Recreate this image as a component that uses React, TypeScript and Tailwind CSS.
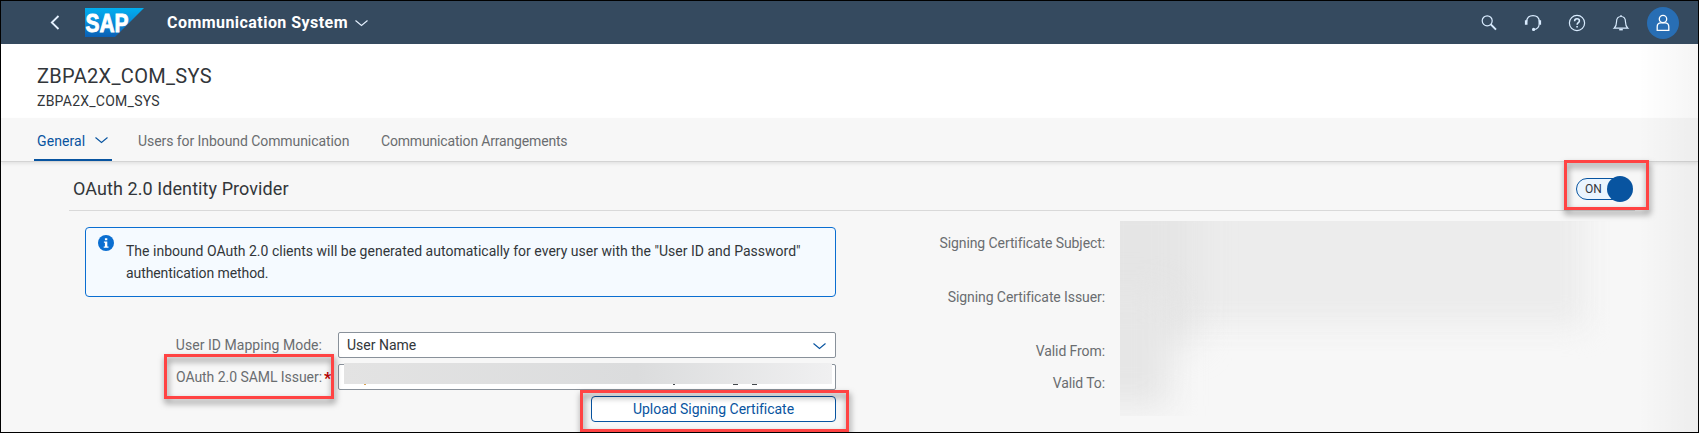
import type { ReactNode } from "react";

function Chevron({ className, d = "M0.5 0.5 6.5 5.5 12.5 0.5" }: { className: string; d?: string }) {
  return (
    <svg viewBox="0 0 13 6" className={"h-[6px] w-[13px] shrink-0 overflow-visible " + className} fill="none" stroke="currentColor" strokeWidth="1.1">
      <path d={d} />
    </svg>
  );
}

function SapLogo() {
  return (
    <svg width="59" height="29" viewBox="0 0 59 29" className="shrink-0">
      <defs>
        <linearGradient id="sap" x1="0" y1="0" x2="0" y2="1">
          <stop offset="0" stopColor="#00aeef" />
          <stop offset="0.5" stopColor="#0a8bd8" />
          <stop offset="1" stopColor="#0a5fb4" />
        </linearGradient>
      </defs>
      <path d="M0 0H59L30 29H0Z" fill="url(#sap)" />
      <text x="0.5" y="23.6" textLength="43" lengthAdjust="spacingAndGlyphs" fill="#fff" stroke="#fff" strokeWidth="0.9" fontFamily="Liberation Sans, sans-serif" fontWeight="700" fontSize="25">
        SAP
      </text>
    </svg>
  );
}

function HeaderIcon({ children }: { children: ReactNode }) {
  return (
    <div className="flex w-11 justify-center">
      <svg width="18" height="18" viewBox="0 0 18 18" fill="none" stroke="#d9ecff" strokeWidth="1.2">
        {children}
      </svg>
    </div>
  );
}

function Marker({ className }: { className: string }) {
  return (
    <div className={"pointer-events-none absolute border-[3px] border-[#ff4343] drop-shadow-[1px_4px_3px_rgba(0,0,0,0.5)] " + className} />
  );
}

function Header() {
  return (
    <header className="flex h-[43px] shrink-0 items-center bg-[#354a5f] text-white">
      <svg width="10" height="15" viewBox="0 0 10 15" className="ml-[49px] shrink-0" fill="none" stroke="#e5f1ff" strokeWidth="1.8">
        <path d="M8.5 1 1.8 7.5 8.5 14" />
      </svg>
      <div className="ml-[25px] flex">
        <SapLogo />
      </div>
      <h1 className="ml-[23px] w-[181px] whitespace-nowrap text-[16px] leading-5 font-bold tracking-[0.45px]">Communication System</h1>
      <Chevron className="mt-[1px] ml-[7px] text-[#e5f1ff]" />
      <div className="ml-auto flex items-center">
        <HeaderIcon>
          <circle cx="7.2" cy="6.8" r="5" />
          <path d="M10.8 10.4 16 15.6" strokeWidth="2" />
        </HeaderIcon>
        <HeaderIcon>
          <path d="M2.6 7.5C3 3.5 5.6 1.6 9 1.6s6 1.9 6.4 5.9" />
          <path d="M2.2 6.2v4.6M15.8 6.2v4.6" strokeWidth="2.6" />
          <path d="M15.2 10.5c-.4 2.8-2.2 4.6-5 5" />
          <circle cx="9.6" cy="15.4" r="1.6" fill="#d9ecff" stroke="none" />
        </HeaderIcon>
        <HeaderIcon>
          <circle cx="9" cy="9" r="7.6" />
          <path d="M6.6 7.2c0-1.5 1-2.4 2.4-2.4s2.4.9 2.4 2.1c0 1.7-2.3 1.8-2.3 3.8" strokeWidth="1.5" />
          <path d="M9.1 12v1.5" strokeWidth="1.6" />
        </HeaderIcon>
        <HeaderIcon>
          <path d="M9 1v1.4M2.2 14.2c1.7-1.5 2.3-3.2 2.3-6.2C4.5 4.6 6.4 2.500 9 2.500s4.500 2.100 4.500 5.500c0 3 .6 4.700 2.300 6.200Z" />
          <path d="M7.200 15.600h3.600" strokeWidth="1.600" />
        </HeaderIcon>
        <div className="mr-[19px] ml-[4px] flex size-8 items-center justify-center rounded-full bg-[#286eb4]">
          <svg width="14" height="18" viewBox="0 0 14 18" fill="none" stroke="#fff" strokeWidth="1.3">
            <circle cx="7" cy="5" r="3.700" />
            <path d="M1.200 16.300v-3.500c0-2.600 1.500-4 3.800-4h4c2.300 0 3.800 1.400 3.800 4v3.500Z" />
          </svg>
        </div>
      </div>
    </header>
  );
}

function Tabs() {
  return (
    <nav className="relative z-10 flex h-[44px] shrink-0 border-b border-[#d4d4d4] bg-[#f7f7f7] pl-[33px] text-[14px] leading-[46px] text-[#6a6d70] shadow-[0_2px_3px_rgba(0,0,0,0.08)]">
      <div className="flex h-[43px] w-[78px] items-center border-b-2 border-[#0854a0] pl-[3px] text-[#0854a0]">
        <span className="w-[49px] pt-[5px] tracking-[0.1px]">General</span>
        <Chevron className="mt-[2px] ml-[9px] text-[#0854a0]" />
      </div>
      <span className="ml-[26px] w-[211px] whitespace-nowrap tracking-[-0.07px]">Users for Inbound Communication</span>
      <span className="ml-[32px] whitespace-nowrap tracking-[-0.17px]">Communication Arrangements</span>
    </nav>
  );
}

function Switch() {
  return (
    <div className="relative mt-[1px] mr-[3px] flex h-[22px] w-[56px] items-center rounded-full border border-[#0854a0] bg-[#ebf5fe] pl-[8px] text-[12px] text-[#32363a]">
      ON
      <span className="absolute -top-[3px] -right-[2px] size-[26px] rounded-full bg-[#0854a0]" />
    </div>
  );
}

function IdentityForm() {
  return (
    <div className="ml-[16px] w-[751px] text-[14px] text-[#32363a]">
      <div className="flex h-[70px] rounded-[4px] border border-[#0a6ed1] bg-[#f5faff] pl-[12px]">
        <svg width="16" height="16" viewBox="0 0 16 16" className="mt-[7px] shrink-0">
          <circle cx="8" cy="8" r="8" fill="#0a6ed1" />
          <path d="M6.900 3.200h2.400v2H6.900ZM5.900 6.500h3.400v5h1.200v1.300H5.700v-1.300h1.200V7.800h-1Z" fill="#fff" />
        </svg>
        <p className="ml-[12px] pt-[12px] leading-[22px] whitespace-nowrap">
          <span className="tracking-[0.01px]">
            The inbound OAuth 2.0 clients will be generated automatically for every user with the "User ID and Password"
          </span>
          <br />
          <span className="tracking-[-0.09px]">authentication method.</span>
        </p>
      </div>
      <div className="mt-[35px] flex items-center">
        <span className="mr-[16px] ml-auto whitespace-nowrap tracking-[0.04px] text-[#6a6d70]">User ID Mapping Mode:</span>
        <div className="flex h-[26px] w-[498px] items-center justify-between rounded-[2px] border border-[#89919a] bg-white pr-[9px] pl-[8px]">
          <span>User Name</span>
          <Chevron className="mt-[1px] text-[#0854a0]" />
        </div>
      </div>
      <div className="mt-[6px] flex items-center">
        <span className="ml-auto whitespace-nowrap tracking-[-0.05px] text-[#6a6d70]">OAuth 2.0 SAML Issuer:</span>
        <span className="w-[16px] pt-[3px] pl-[2px] text-[16px] leading-5 font-bold text-[#bb0000]">*</span>
        <div className="relative h-[26px] w-[498px] rounded-[2px] border border-[#89919a] bg-white">
          <div className="absolute -top-[2px] left-[5px] h-[21px] w-[488px] bg-linear-to-r from-[#e3e3e3] via-[#dbdcdd] via-60% to-[#f0f0f1]" />
          <i className="absolute top-[19px] left-[25px] h-px w-[2px] bg-[#d9a050]" />
          <i className="absolute top-[19px] left-[334px] h-px w-[2px] bg-[#44484c]" />
          <i className="absolute top-[19px] left-[394px] h-px w-[5px] bg-[#44484c]" />
          <i className="absolute top-[19px] left-[413px] h-px w-[5px] bg-[#44484c]" />
        </div>
      </div>
      <button className="mt-[6px] ml-auto flex h-[26px] w-[245px] items-center justify-center rounded-[4px] border border-[#0854a0] bg-white tracking-[-0.03px] text-[#0854a0]">
        Upload Signing Certificate
      </button>
    </div>
  );
}

function CertificateDetails() {
  return (
    <div className="-mt-[6px] flex text-[14px] text-[#6a6d70]">
      <div className="flex w-[269px] flex-col items-end leading-[20px] tracking-[-0.09px] whitespace-nowrap">
        <span className="mt-[12px]">Signing Certificate Subject:</span>
        <span className="mt-[34px]">Signing Certificate Issuer:</span>
        <span className="mt-[34px]">Valid From:</span>
        <span className="mt-[12px]">Valid To:</span>
      </div>
      <div className="relative ml-[15px] h-[195px] w-[520px] overflow-hidden">
        <div className="absolute -top-[40px] -left-[40px] h-[145px] w-[505px] bg-[#ececec] blur-[14px]" />
        <div className="absolute -top-[40px] -left-[40px] h-[160px] w-[115px] bg-[#e5e5e5] blur-[18px]" />
        <div className="absolute top-[70px] -left-[40px] h-[115px] w-[90px] bg-[#e6e6e6] blur-[16px]" />
      </div>
    </div>
  );
}

export default function App() {
  return (
    <div className="relative flex h-[433px] w-[1699px] flex-col overflow-hidden border border-black bg-[#f7f7f7] font-['Roboto','Liberation_Sans',sans-serif]">
      <Header />
      <div className="h-[74px] shrink-0 bg-white pl-[36px] text-[#32363a]">
        <h2 className="pt-[19px] text-[20px] leading-[26px] tracking-[0.32px]">ZBPA2X_COM_SYS</h2>
        <p className="pt-[3px] text-[14px] leading-[18px] tracking-[0.25px]">ZBPA2X_COM_SYS</p>
      </div>
      <Tabs />
      <section className="pl-[68px]">
        <div className="flex h-[49px] w-[1566px] items-center justify-between border-b border-[#d9d9d9] pt-[4px] pl-[4px]">
          <h3 className="text-[18px] tracking-[0.08px] text-[#32363a]">OAuth 2.0 Identity Provider</h3>
          <Switch />
        </div>
        <div className="flex pt-[16px]">
          <IdentityForm />
          <CertificateDetails />
        </div>
      </section>
      <div className="pointer-events-none absolute top-[43px] right-0 bottom-0 z-20 w-[60px] bg-linear-to-r from-transparent to-black/[0.04]" />
      <Marker className="top-[159px] left-[1563px] z-30 h-[50px] w-[85px]" />
      <Marker className="top-[353px] left-[163px] h-[45px] w-[170px]" />
      <Marker className="top-[389px] left-[579px] h-[42px] w-[269px]" />
    </div>
  );
}
